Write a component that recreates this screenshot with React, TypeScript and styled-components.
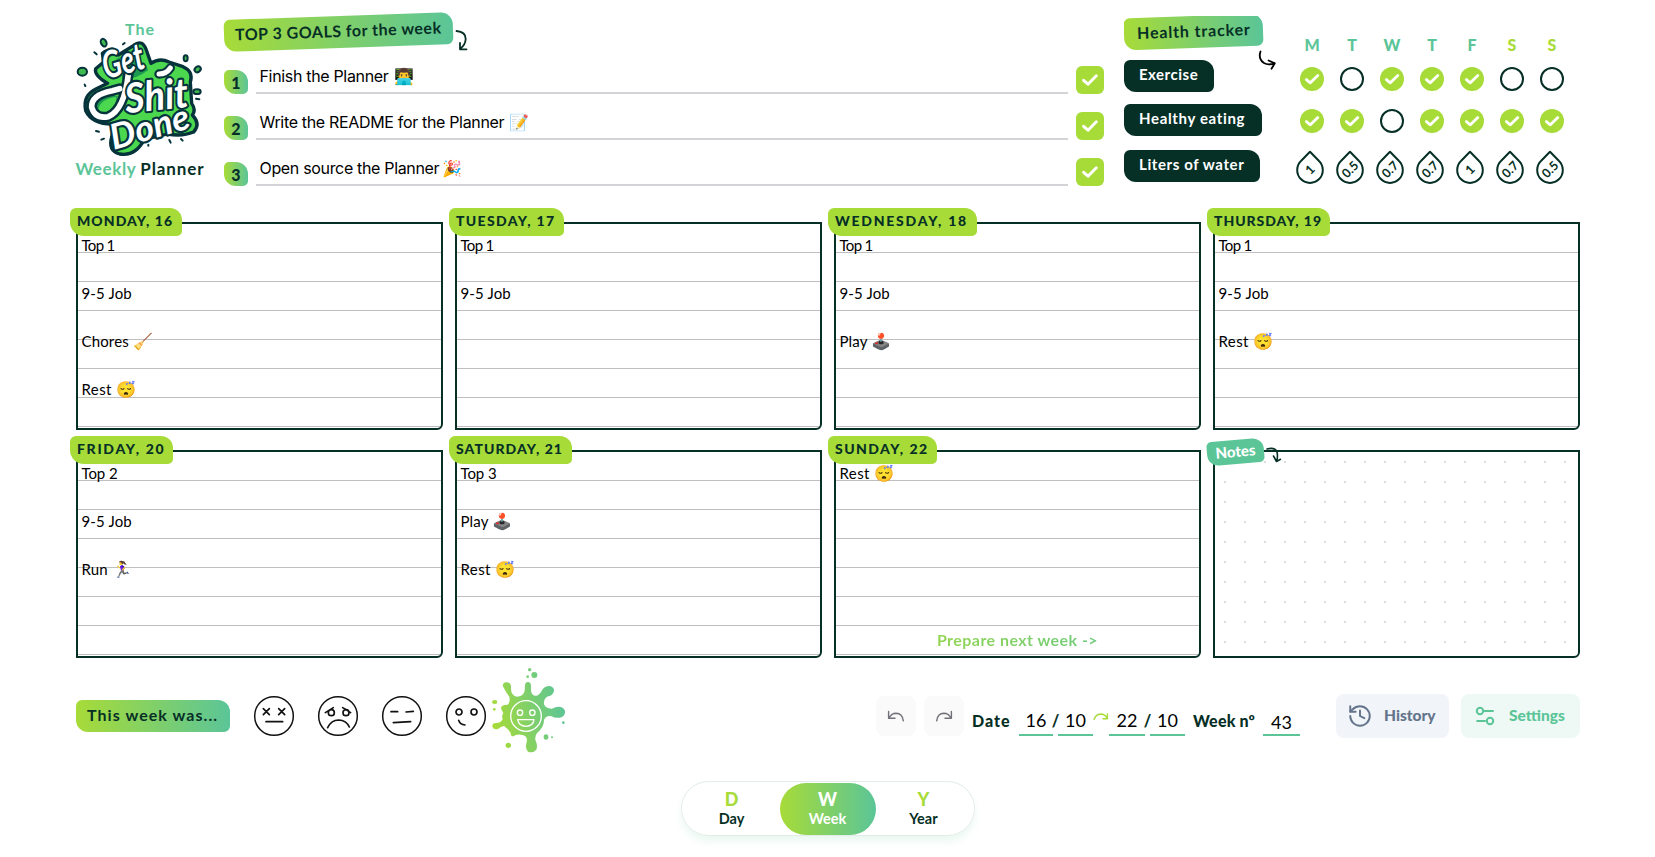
import React from 'react';
import styled, { createGlobalStyle, css } from 'styled-components';
import { History } from 'lucide-react';

const ink = '#062f26';
const lime = '#a7db38';
const mint = '#5bc598';
const gradient = `linear-gradient(to right, ${lime}, ${mint})`;
const sans = 'Lato, "Noto Sans", sans-serif';

const GlobalStyle = createGlobalStyle`
  *, *::before, *::after { box-sizing: border-box; }
  body { margin: 0; background: #fff; color: #000; font-family: ${sans}; }
  svg { display: block; flex: none; overflow: visible; }
`;

const Page = styled.main`
  width: 1655px;
  height: 857px;
  padding: 16px 75px 0 76px;
  display: flex;
  flex-direction: column;
  overflow: hidden;
`;

const Hand = styled.span<{ $size?: number; $ls?: number; $color?: string }>`
  font-weight: 700;
  font-size: ${p => p.$size ?? 16}px;
  letter-spacing: ${p => p.$ls ?? 0}px;
  color: ${p => p.$color ?? 'inherit'};
  line-height: 1.2;
  white-space: nowrap;
`;

/* ---------- header ---------- */

const Header = styled.header`
  display: flex;
  height: 206px;
`;

const Brand = styled.div`
  width: 130px;
  margin: 3px 19px 0 -1px;
  display: flex;
  flex-direction: column;
  align-items: center;
  > svg { margin-top: -2px; }
`;

const BrandName = styled.div`
  display: flex;
  gap: 4px;
  margin-top: 1px;
`;

const Goals = styled.section`
  width: 880px;
  margin-right: 20px;
`;

const TitleRow = styled.div`
  display: flex;
  align-items: flex-start;
  gap: 2px;
  height: 32px;
  svg { margin-top: 13px; }
`;

const Pill = styled.div<{ $width: number; $tilt?: number; $pad: number }>`
  width: ${p => p.$width}px;
  height: 32px;
  padding: 0 0 3px ${p => p.$pad}px;
  display: flex;
  align-items: center;
  border-radius: 6px 12px 6px 12px;
  background: ${gradient};
  color: ${ink};
  transform: rotate(${p => p.$tilt ?? 0}deg);
`;

const GoalList = styled.div`
  margin-top: 18px;
  display: flex;
  flex-direction: column;
  gap: 18px;
`;

const GoalRow = styled.div`
  display: flex;
  align-items: flex-end;
  gap: 8px;
  height: 28px;
`;

const Badge = styled.span`
  width: 24px;
  height: 24px;
  display: flex;
  align-items: center;
  justify-content: center;
  border-radius: 5px 12px 5px 12px;
  background: ${gradient};
  color: ${ink};
  font-size: 16px;
  font-weight: 900;
`;

const GoalText = styled.div`
  flex: 1;
  height: 28px;
  padding: 0 3px 5px 3.5px;
  border-bottom: 2px solid #d4d4d8;
  font: 400 16px/21px Inter, sans-serif;
  letter-spacing: -0.33px;
  white-space: pre;
`;

const Emoji = styled.span<{ $gap?: number }>`
  font-size: 16px;
  line-height: 0;
  letter-spacing: 0;
  margin-left: ${p => p.$gap ?? 0}px;
`;

const CheckBox = styled.span`
  width: 28px;
  height: 28px;
  border-radius: 6px;
  background: ${lime};
`;

const Health = styled.section`
  flex: 1;
  display: flex;
  align-items: flex-start;
  overflow: hidden;
`;

const HealthLabels = styled.div`
  width: 139px;
  display: flex;
  flex-direction: column;
  align-items: flex-start;
`;

const Tag = styled.div<{ $width: number; $top: number }>`
  width: ${p => p.$width}px;
  height: 32px;
  margin-top: ${p => p.$top}px;
  padding: 0 0 5px 15px;
  display: flex;
  align-items: center;
  border-radius: 6px 12px 6px 12px;
  background: ${ink};
  color: #fff;
`;

const TrackerArrow = styled.div`
  margin: 34px 14px 0 -5px;
`;

const Tracker = styled.div`
  margin-top: 19px;
`;

const TrackerRow = styled.div<{ $top?: number; $shift?: number }>`
  display: grid;
  grid-template-columns: repeat(7, 40px);
  justify-items: center;
  margin: ${p => p.$top ?? 0}px 0 0 ${p => p.$shift ?? 0}px;
`;

const DayLetter = styled.span<{ $weekend: boolean }>`
  height: 20px;
  line-height: 20px;
  font-size: 16px;
  font-weight: 900;
  color: ${p => (p.$weekend ? lime : mint)};
`;

const Circle = styled.span<{ $on: boolean }>`
  width: 24px;
  height: 24px;
  border-radius: 50%;
  ${p => (p.$on ? css`background: ${lime};` : css`border: 2px solid ${ink};`)}
`;

/* ---------- week grid ---------- */

const Week = styled.section`
  display: grid;
  grid-template-columns: repeat(4, 367px);
  grid-auto-rows: 208px;
  gap: 20px 12px;
`;

const Card = styled.article<{ $dots?: boolean }>`
  position: relative;
  display: flex;
  flex-direction: column;
  border: 2px solid ${ink};
  border-radius: 0 0 6px 0;
  padding: 9px 0 0 4px;
  ${p =>
    p.$dots
      ? css`background: radial-gradient(#dcdcdc 1.1px, transparent 1.2px) 0 0 / 20px 20px;`
      : css`background: repeating-linear-gradient(to bottom, transparent 0 28px, #bfbfbf 28px 29px);`}
`;

const DayLabel = styled.h2<{ $width: number; $ls: number }>`
  position: absolute;
  top: -16px;
  left: -8px;
  width: ${p => p.$width}px;
  height: 28px;
  margin: 0;
  padding: 0 0 0 7px;
  border-radius: 6px 12px 5px 14px;
  background: ${lime};
  color: ${ink};
  font-size: 14px;
  font-weight: 900;
  line-height: 26px;
  letter-spacing: ${p => p.$ls}px;
  white-space: nowrap;
`;

const Task = styled.div<{ $ls?: number }>`
  height: 24px;
  margin: 0 0 24px -0.5px;
  font-size: 15px;
  line-height: 24px;
  letter-spacing: ${p => p.$ls ?? 0.15}px;
  white-space: pre;
`;

const NextWeek = styled.button`
  margin: auto 4px 5px 0;
  padding: 0;
  border: 0;
  background: ${gradient};
  background-clip: text;
  color: transparent;
  font: 700 16px/22px ${sans};
  letter-spacing: 0.45px;
`;

const NotesLabel = styled.div`
  position: absolute;
  top: -12px;
  left: -8px;
  display: flex;
  gap: 2px;
  svg { margin-top: 6px; }
`;

const NotesBadge = styled.span`
  width: 57px;
  height: 24px;
  border-radius: 5px 11px 5px 11px;
  background: ${mint};
  color: #fff;
  font-size: 15px;
  font-weight: 900;
  line-height: 22px;
  text-align: center;
  transform: rotate(-5deg);
`;

/* keeps the dot pattern clear around the notes badge */
const DotGap = styled.div`
  position: absolute;
  top: 0;
  left: 0;
  width: 46px;
  height: 16px;
  background: #fff;
`;

/* ---------- footer ---------- */

const Footer = styled.footer`
  display: flex;
  align-items: center;
  height: 44px;
  margin-top: 36px;
`;

const Moods = styled.div`
  display: flex;
  align-items: center;
  gap: 24px;
  margin-left: 24px;
`;

const SplatSlot = styled.div`
  width: 40px;
  height: 40px;
  svg { margin: -31px 0 0 -20px; }
`;

const Actions = styled.div`
  display: flex;
  align-items: center;
  margin-left: auto;
`;

const IconButton = styled.button`
  width: 40px;
  height: 40px;
  margin-right: 8px;
  padding: 0;
  border: 0;
  border-radius: 8px;
  background: #fafafa;
  display: flex;
  align-items: center;
  justify-content: center;
`;

const Dates = styled.div`
  display: flex;
  align-items: flex-end;
  height: 40px;
  margin-right: 36px;
  color: ${ink};
`;

const DateLabel = styled.span<{ $width: number; $left: number; $ls: number }>`
  width: ${p => p.$width}px;
  margin-left: ${p => p.$left}px;
  padding-bottom: 5px;
  font-weight: 900;
  font-size: 16px;
  line-height: 20px;
  letter-spacing: ${p => p.$ls}px;
  white-space: nowrap;
`;

const Field = styled.span<{ $width: number; $low?: boolean }>`
  width: ${p => p.$width}px;
  height: 34px;
  padding-top: ${p => (p.$low ? 8 : 6)}px;
  border-bottom: 2px solid ${mint};
  color: #000;
  font-size: 18px;
  line-height: 24px;
  text-align: center;
`;

const Slash = styled.span`
  width: 5px;
  padding-bottom: 4px;
  font-weight: 900;
  font-size: 16px;
  line-height: 22px;
  display: flex;
  justify-content: center;
`;

const RangeArrow = styled.span`
  width: 16px;
  padding-bottom: 14px;
`;

const WideButton = styled.button<{ $width: number; $bg: string; $fg: string; $gap: number }>`
  width: ${p => p.$width}px;
  height: 44px;
  padding: 0 0 2px 11px;
  border: 0;
  border-radius: 8px;
  background: ${p => p.$bg};
  color: ${p => p.$fg};
  display: flex;
  align-items: center;
  gap: ${p => p.$gap}px;
  font: 900 15.5px/20px ${sans};
  & + & { margin-left: 12px; }
  svg { margin-top: 1px; }
`;

const Nav = styled.nav`
  align-self: center;
  width: 294px;
  height: 55px;
  margin: 43px 1px 0 0;
  padding: 1px 2px;
  display: flex;
  border: 1px solid #e3ece8;
  border-radius: 28px;
  box-shadow: 0 6px 10px -2px rgba(91, 197, 152, 0.16);
`;

const NavItem = styled.a<{ $active?: boolean }>`
  width: 96px;
  height: 52px;
  padding-top: 6px;
  border-radius: 26px;
  display: flex;
  flex-direction: column;
  align-items: center;
  color: ${p => (p.$active ? '#fff' : ink)};
  ${p => p.$active && css`background: ${gradient};`}
  font: 700 14.5px/20px ${sans};
`;

const NavLetter = styled.span<{ $active?: boolean }>`
  font-size: 18px;
  line-height: 20px;
  font-weight: 900;
  color: ${p => (p.$active ? '#fff' : lime)};
`;

/* ---------- drawings ---------- */

const Logo = () => (
  <svg width="130" height="122" viewBox="48 108 390 366">
    <g stroke="#06333b" strokeLinejoin="round" strokeLinecap="round">
      <g fill="#3fb950" strokeWidth="6">
        <ellipse cx="134" cy="128" rx="8" ry="12" transform="rotate(-25 134 128)" />
        <ellipse cx="70" cy="215" rx="14" ry="12" />
        <ellipse cx="380" cy="175" rx="6" ry="9" />
        <ellipse cx="416" cy="208" rx="10" ry="8" transform="rotate(-40 416 208)" />
        <ellipse cx="414" cy="275" rx="11" ry="7" />
      </g>
      <path
        strokeWidth="6"
        fill="none"
        d="M106 157l7 6M192 133l5-4M77 254l2 4M411 296l10 2M111 393l9 2M127 419l8-3M268 434v3M331 420l4 8M366 417l5 5"
      />
      <path
        fill="#4bd84f"
        strokeWidth="10"
        d="M130 160Q150 140 178 165L228 134Q250 118 262 150L276 190Q302 172 330 186L372 200Q404 214 394 246L398 310Q412 330 400 345Q426 372 404 396Q370 410 326 402L256 418Q230 470 182 462Q146 452 158 412L166 372Q100 374 80 332Q70 286 112 266L146 250Q104 226 110 206L134 186Z"
      />
      <path fill="#1d9a50" stroke="none" d="M172 176Q230 150 268 210Q230 240 190 236ZM110 322Q110 296 150 284L176 288Q176 330 140 344Q112 344 110 322Z" />
      <path fill="#4bd84f" stroke="none" d="M118 326Q126 296 172 290Q172 324 144 338Q124 340 118 326Z" />
      <path fill="none" strokeWidth="32" d="M208 222Q196 330 148 350Q108 358 98 322Q96 284 160 272L182 266" />
      <path fill="none" strokeWidth="28" d="M300 222Q322 222 334 204" />
    </g>
    <g fill="none" stroke="#fff" strokeLinecap="round">
      <path strokeWidth="17" d="M208 222Q196 330 148 350Q108 358 98 322Q96 284 160 272L182 266" />
      <path strokeWidth="15" d="M300 222Q322 222 334 204" />
    </g>
    <g
      fill="#fff"
      stroke="#06333b"
      strokeWidth="13"
      strokeLinejoin="round"
      paintOrder="stroke"
      fontFamily="Lato, sans-serif"
      fontStyle="italic"
      fontWeight="700"
    >
      <text fontSize="112" textLength="126" lengthAdjust="spacingAndGlyphs" transform="translate(142 238) rotate(-16)">Get</text>
      <text fontSize="124" textLength="190" lengthAdjust="spacingAndGlyphs" transform="translate(202 340) rotate(-6)">Shit</text>
      <text fontSize="106" textLength="244" lengthAdjust="spacingAndGlyphs" transform="translate(164 450) rotate(-16)">Done</text>
    </g>
  </svg>
);

const stroke = (color: string, width = 2) => ({
  fill: 'none',
  stroke: color,
  strokeWidth: width,
  strokeLinecap: 'round' as const,
  strokeLinejoin: 'round' as const,
});

const BoxCheck = () => (
  <svg width="28" height="28" viewBox="0 0 28 28">
    <path {...stroke('#fff', 3)} d="M7.6 14.3L12 18.2L20.3 9.8" />
  </svg>
);

const CircleCheck = () => (
  <svg width="24" height="24" viewBox="0 0 24 24">
    <path {...stroke('#fff', 2.8)} d="M6.4 12.6L10.3 15.8L17.8 8.6" />
  </svg>
);

const Drop = ({ value }: { value: string }) => (
  <svg width="28" height="34" viewBox="0 0 28 34">
    <path {...stroke(ink)} d="M14 1.8L5.2 10.8A12.8 12.8 0 1 0 22.8 10.8Z" />
    <text
      transform="translate(14 19.5) rotate(-45)"
      y="4.4"
      textAnchor="middle"
      fill={ink}
      fontFamily={sans}
      fontWeight="700"
      fontSize="12.5"
    >
      {value}
    </text>
  </svg>
);

const faces = [
  'M-32 -22L-14 -4M-14 -22L-32 -4M14 -22L32 -4M32 -22L14 -4M-24 17H26',
  'M-11 -10A9 9 0 1 1 -29 -10A9 9 0 1 1 -11 -10M33 -10A9 9 0 1 1 15 -10A9 9 0 1 1 33 -10M-38 -10L-14 -25M14 -25L38 -10M-31 35Q-20 12 2 12Q25 13 34 33',
  'M-33 -13H-13M12 -12L34 -14M-26 20L26 17',
  'M-12 -12A9 9 0 1 1 -30 -12A9 9 0 1 1 -12 -12M33 -12A9 9 0 1 1 15 -12A9 9 0 1 1 33 -12M-22 13Q-18 26 -3 27',
];

const Face = ({ d }: { d: string }) => (
  <svg width="40" height="40" viewBox="-60 -60 120 120">
    <circle r="58" {...stroke('#111', 4.5)} />
    <path {...stroke('#111', 5)} d={d} />
  </svg>
);

const Splat = () => (
  <svg width="78" height="90" viewBox="450 30 234 270">
    <defs>
      <linearGradient id="splat" gradientUnits="userSpaceOnUse" x1="456" y1="200" x2="676" y2="150">
        <stop offset="0" stopColor={lime} />
        <stop offset="1" stopColor={mint} />
      </linearGradient>
    </defs>
    <g fill="url(#splat)">
      <path d="M488 92Q490 80 502 82Q514 84 513 98Q512 120 530 125Q550 125 554 108L555 90Q556 81 564 81Q573 82 573 92L573 108Q576 124 590 122Q600 118 607 104Q615 92 630 93Q643 97 642 108Q638 122 625 124Q610 130 612 148Q618 162 636 161Q648 154 662 156Q676 160 675 173Q672 187 658 188Q645 190 635 184Q618 180 612 195Q612 212 598 228Q584 238 586 255Q594 270 589 284Q578 296 564 290Q554 280 560 262Q564 244 548 240Q530 236 520 244Q512 245 512 234Q505 222 492 213Q482 215 475 221Q462 226 457 215Q456 204 468 204Q482 205 488 192Q484 182 490 174Q480 162 485 154Q492 148 502 150Q512 140 508 125Q498 112 488 92Z" />
      <circle cx="569" cy="44" r="5" />
      <circle cx="583" cy="60" r="9" />
      <circle cx="563" cy="65" r="4" />
      <ellipse cx="464" cy="141" rx="8" ry="6" />
      <circle cx="463" cy="163" r="4" />
      <circle cx="505" cy="271" r="8" />
      <ellipse cx="618" cy="246" rx="7" ry="8" />
      <circle cx="636" cy="247" r="3" />
      <circle cx="670" cy="203" r="4" />
    </g>
    <g {...stroke('#fff', 4)}>
      <circle cx="558" cy="183" r="46" />
      <circle cx="540" cy="173" r="8" />
      <circle cx="577" cy="173" r="8" />
      <path d="M533 194H582Q580 213 558 214Q536 213 533 194Z" />
    </g>
  </svg>
);

const Undo = ({ flip }: { flip?: boolean }) => (
  <svg width="20" height="20" viewBox="0 0 20 20">
    <g transform={flip ? 'translate(20 0) scale(-1 1)' : undefined}>
      <path {...stroke('#71717a', 1.4)} d="M2.6 5.5V12.3H9M2.8 12Q5.8 7.2 10 7.2Q16.5 7.4 17.3 14.8" />
    </g>
  </svg>
);

const Sliders = () => (
  <svg width="22" height="22" viewBox="0 0 22 22">
    <g {...stroke(mint)}>
      <circle cx="8" cy="6" r="3.2" />
      <path d="M12.2 6H21M5.2 16H13" />
      <circle cx="18" cy="16" r="3.2" />
    </g>
  </svg>
);

/* ---------- data ---------- */

const goals = [
  { text: 'Finish the Planner', emoji: '👨‍💻', gap: 1 },
  { text: 'Write the README for the Planner', emoji: '📝', gap: 1 },
  { text: 'Open source the Planner', emoji: '🎉', gap: -1 },
];

type TaskItem = { text: string; emoji?: string; ls?: number };
const top = (n: number): TaskItem => ({ text: `Top ${n}`, ls: n === 1 ? -0.7 : -0.1 });
const job: TaskItem = { text: '9-5 Job' };
const rest: TaskItem = { text: 'Rest', emoji: '😴', ls: 0.4 };
const play: TaskItem = { text: 'Play', emoji: '🕹️' };

const days: { label: string; width: number; ls: number; tasks: TaskItem[]; last?: boolean }[] = [
  { label: 'MONDAY, 16', width: 112, ls: 1.05, tasks: [top(1), job, { text: 'Chores', emoji: '🧹' }, rest] },
  { label: 'TUESDAY, 17', width: 115, ls: 1.35, tasks: [top(1), job] },
  { label: 'WEDNESDAY, 18', width: 149, ls: 1.75, tasks: [top(1), job, play] },
  { label: 'THURSDAY, 19', width: 123, ls: 0.95, tasks: [top(1), job, rest] },
  { label: 'FRIDAY, 20', width: 103, ls: 1.7, tasks: [top(2), job, { text: 'Run', emoji: '🏃‍♀️' }] },
  { label: 'SATURDAY, 21', width: 123, ls: 1.05, tasks: [top(3), play, rest] },
  { label: 'SUNDAY, 22', width: 109, ls: 1.45, tasks: [rest], last: true },
];

const letters = ['M', 'T', 'W', 'T', 'F', 'S', 'S'];
const exercise = [1, 0, 1, 1, 1, 0, 0];
const eating = [1, 1, 0, 1, 1, 1, 1];
const water = ['1', '0.5', '0.7', '0.7', '1', '0.7', '0.5'];

export default function App() {
  return (
    <Page>
      <GlobalStyle />
      <Header>
        <Brand>
          <Hand $size={16} $ls={1} $color={mint}>The</Hand>
          <Logo />
          <BrandName>
            <Hand $size={17} $ls={0.6} $color={mint}>Weekly</Hand>
            <Hand $size={17} $ls={0.9} $color={ink}>Planner</Hand>
          </BrandName>
        </Brand>

        <Goals>
          <TitleRow>
            <Pill $width={229} $tilt={-2} $pad={11}>
              <Hand $ls={0.5}>TOP 3 GOALS for the week</Hand>
            </Pill>
            <svg width="14" height="22" viewBox="0 0 14 22">
              <path {...stroke(ink, 1.8)} d="M1.5 2Q11 3 10.7 10Q10.4 16 5 20M5 14V20.3H11.5" />
            </svg>
          </TitleRow>
          <GoalList>
            {goals.map((g, i) => (
              <GoalRow key={g.text}>
                <Badge>{i + 1}</Badge>
                <GoalText>
                  {g.text} <Emoji $gap={g.gap}>{g.emoji}</Emoji>
                </GoalText>
                <CheckBox><BoxCheck /></CheckBox>
              </GoalRow>
            ))}
          </GoalList>
        </Goals>

        <Health>
          <HealthLabels>
            <Pill $width={139} $tilt={-2} $pad={13}>
              <Hand $ls={0.85}>Health tracker</Hand>
            </Pill>
            <Tag $width={90} $top={12}><Hand $size={15} $ls={0.5}>Exercise</Hand></Tag>
            <Tag $width={138} $top={12}><Hand $size={15} $ls={0.65}>Healthy eating</Hand></Tag>
            <Tag $width={136} $top={14}><Hand $size={15} $ls={0.6}>Liters of water</Hand></Tag>
          </HealthLabels>
          <TrackerArrow>
            <svg width="20" height="20" viewBox="0 0 20 20">
              <path {...stroke('#000', 1.8)} d="M2.5 1.5Q0 9 6 13Q10 15.5 16.5 13.3M10.5 10.5L16.8 13.3L13.5 18.8" />
            </svg>
          </TrackerArrow>
          <Tracker>
            <TrackerRow>
              {letters.map((l, i) => <DayLetter key={i} $weekend={i > 4}>{l}</DayLetter>)}
            </TrackerRow>
            <TrackerRow $top={12}>
              {exercise.map((v, i) => <Circle key={i} $on={!!v}>{!!v && <CircleCheck />}</Circle>)}
            </TrackerRow>
            <TrackerRow $top={18}>
              {eating.map((v, i) => <Circle key={i} $on={!!v}>{!!v && <CircleCheck />}</Circle>)}
            </TrackerRow>
            <TrackerRow $top={17} $shift={-2}>
              {water.map((v, i) => <Drop key={i} value={v} />)}
            </TrackerRow>
          </Tracker>
        </Health>
      </Header>

      <Week>
        {days.map(d => (
          <Card key={d.label}>
            <DayLabel $width={d.width} $ls={d.ls}>{d.label}</DayLabel>
            {d.tasks.map(t => (
              <Task key={t.text} $ls={t.ls}>
                {t.text}{t.emoji && <> <Emoji>{t.emoji}</Emoji></>}
              </Task>
            ))}
            {d.last && <NextWeek>{'Prepare next week ->'}</NextWeek>}
          </Card>
        ))}
        <Card $dots>
          <DotGap />
          <NotesLabel>
            <NotesBadge>Notes</NotesBadge>
            <svg width="16" height="18" viewBox="0 0 16 18">
              <path {...stroke(ink, 1.6)} d="M1 3Q9 1 11 6Q12 10 10.8 15M7.5 10L10.5 15.5L14.5 13.3" />
            </svg>
          </NotesLabel>
        </Card>
      </Week>

      <Footer>
        <Pill $width={154} $pad={11}><Hand $ls={1.05}>This week was...</Hand></Pill>
        <Moods>
          {faces.map(d => <Face key={d} d={d} />)}
          <SplatSlot><Splat /></SplatSlot>
        </Moods>
        <Actions>
          <IconButton aria-label="Undo"><Undo /></IconButton>
          <IconButton aria-label="Redo"><Undo flip /></IconButton>
          <Dates>
            <DateLabel $width={47} $left={0} $ls={1}>Date</DateLabel>
            <Field $width={34}>16</Field>
            <Slash>/</Slash>
            <Field $width={35}>10</Field>
            <RangeArrow>
              <svg width="16" height="12" viewBox="0 0 16 12">
                <path {...stroke(lime, 1.4)} d="M1 9.5Q3 4.2 7.5 4Q12 4.2 14 8M14.4 4V8.7H10" />
              </svg>
            </RangeArrow>
            <Field $width={36}>22</Field>
            <Slash>/</Slash>
            <Field $width={35}>10</Field>
            <DateLabel $width={70} $left={8} $ls={0.2}>Week nº</DateLabel>
            <Field $width={37} $low>43</Field>
          </Dates>
          <WideButton $width={113} $bg="#f1f4f9" $fg="#64748b" $gap={11}>
            <History size={26} strokeWidth={1.8} />
            History
          </WideButton>
          <WideButton $width={119} $bg="#eef9f5" $fg={mint} $gap={15}>
            <Sliders />
            Settings
          </WideButton>
        </Actions>
      </Footer>

      <Nav>
        <NavItem><NavLetter>D</NavLetter>Day</NavItem>
        <NavItem $active><NavLetter $active>W</NavLetter>Week</NavItem>
        <NavItem><NavLetter>Y</NavLetter>Year</NavItem>
      </Nav>
    </Page>
  );
}
